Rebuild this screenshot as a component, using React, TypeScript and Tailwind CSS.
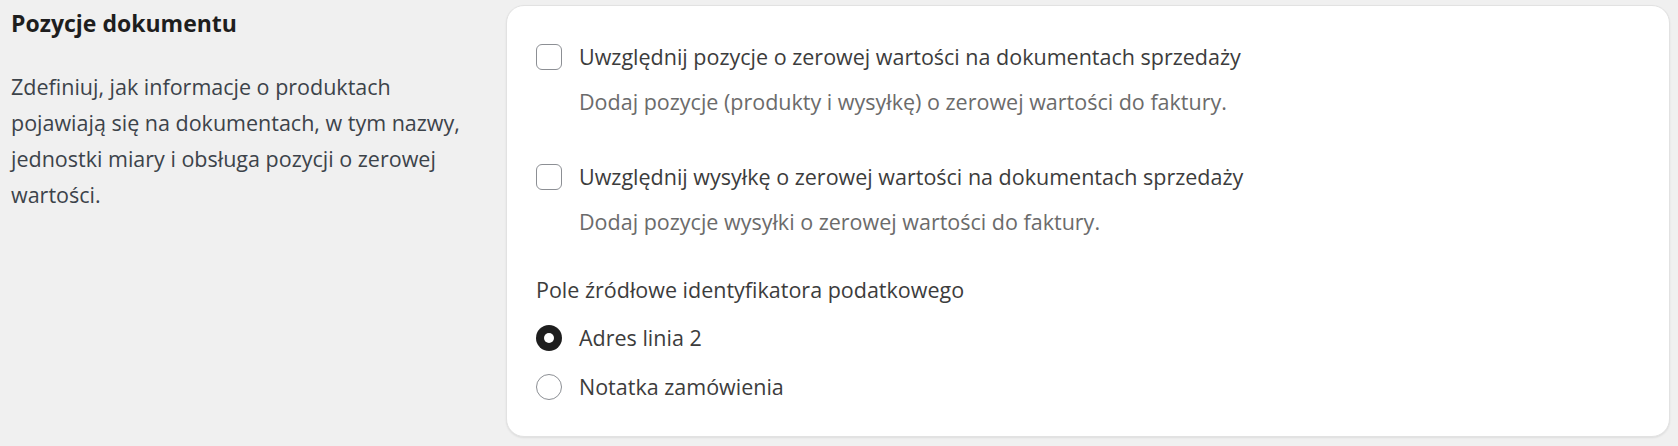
import { useState } from 'react'

const font = { fontFamily: '"Open Sans", "Noto Sans", sans-serif' }

type Option = { id: string; label: string; hint: string }

const toggles: Option[] = [
  {
    id: 'zero-items',
    label: 'Uwzględnij pozycje o zerowej wartości na dokumentach sprzedaży',
    hint: 'Dodaj pozycje (produkty i wysyłkę) o zerowej wartości do faktury.',
  },
  {
    id: 'zero-shipping',
    label: 'Uwzględnij wysyłkę o zerowej wartości na dokumentach sprzedaży',
    hint: 'Dodaj pozycje wysyłki o zerowej wartości do faktury.',
  },
]

const sources = ['Adres linia 2', 'Notatka zamówienia']

function Checkbox({ checked, onChange }: { checked: boolean; onChange: () => void }) {
  return (
    <button
      type="button"
      onClick={onChange}
      className={`mt-[1px] flex h-[26px] w-[26px] shrink-0 items-center justify-center rounded-[6px] border-[1.5px] ${
        checked ? 'border-[#1e1e1e] bg-[#1e1e1e]' : 'border-[#8c8f94] bg-white'
      }`}
    >
      {checked && (
        <svg viewBox="0 0 24 24" className="h-[18px] w-[18px]" fill="none" stroke="white" strokeWidth={3}>
          <path d="M5 12.5l4.5 4.5L19 7.5" />
        </svg>
      )}
    </button>
  )
}

function Radio({ checked }: { checked: boolean }) {
  return checked ? (
    <span className="flex h-[26px] w-[26px] shrink-0 items-center justify-center rounded-full bg-[#1e1e1e]">
      <span className="h-[10px] w-[10px] rounded-full bg-white" />
    </span>
  ) : (
    <span className="h-[26px] w-[26px] shrink-0 rounded-full border-[1.5px] border-[#8c8f94] bg-white" />
  )
}

export default function App() {
  const [flags, setFlags] = useState<Record<string, boolean>>({})
  const [source, setSource] = useState(sources[0])

  return (
    <div className="flex min-h-[446px] w-full bg-[#f0f0f0] pb-[9px] pr-[8px] pt-[5px]" style={font}>
      <div className="w-[506px] shrink-0 pl-[11px]">
        <h2 className="mt-[4px] text-[23px] font-bold leading-[28px] text-[#1e1e1e]">Pozycje dokumentu</h2>
        <p className="mt-[32px] w-[462px] text-[21.5px] leading-[36px] text-[#3c434a]">
          Zdefiniuj, jak informacje o produktach pojawiają się na dokumentach, w tym nazwy, jednostki miary i obsługa
          pozycji o zerowej wartości.
        </p>
      </div>

      <div className="flex-1 rounded-[18px] border border-[#e2e2e2] bg-white px-[29px] pb-[34px] pt-[37px] shadow-[0_1px_2px_rgba(0,0,0,0.08)]">
        <div className="flex flex-col gap-[47px]">
          {toggles.map((t) => (
            <div key={t.id} className="flex gap-[17px]">
              <Checkbox checked={!!flags[t.id]} onChange={() => setFlags({ ...flags, [t.id]: !flags[t.id] })} />
              <div className="flex flex-col">
                <span className="text-[21.5px] leading-[28px] text-[#3c3c3c]">{t.label}</span>
                <span className="mt-[17px] text-[21.5px] leading-[28px] text-[#6b6b6b]">{t.hint}</span>
              </div>
            </div>
          ))}
        </div>

        <div className="mt-[40px] text-[21.5px] leading-[28px] text-[#3c3c3c]">Pole źródłowe identyfikatora podatkowego</div>
        <div className="mt-[21px] flex flex-col gap-[23px]">
          {sources.map((s) => (
            <label key={s} className="flex cursor-pointer items-center gap-[17px]" onClick={() => setSource(s)}>
              <Radio checked={source === s} />
              <span className="text-[21.5px] leading-[26px] text-[#3c3c3c]">{s}</span>
            </label>
          ))}
        </div>
      </div>
    </div>
  )
}
